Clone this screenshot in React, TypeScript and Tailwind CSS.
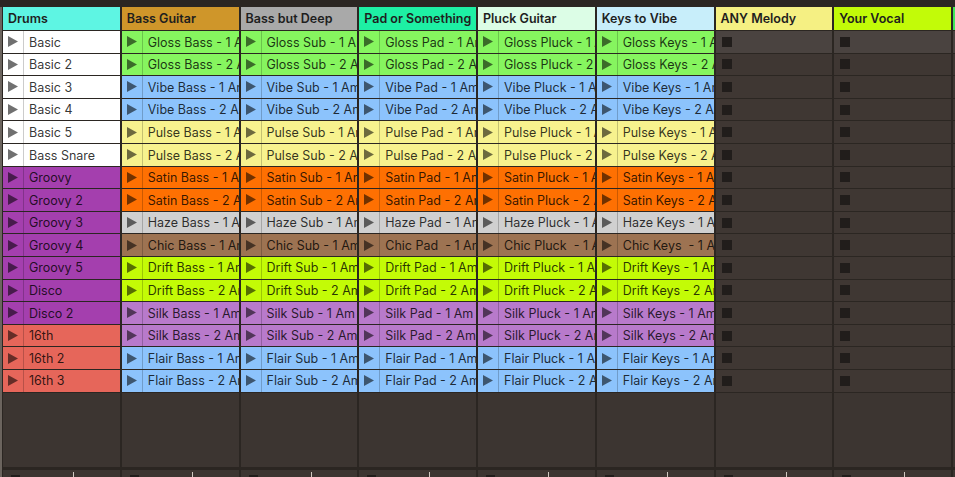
import React from 'react';

type Clip = { name: string; color: string } | null;

interface Track {
    title: string;
    header: string;
    clips: Clip[];
}

const ROW_COLORS = [
    '#86f55f', '#86f55f', '#8cc3fc', '#8cc3fc', '#f7f28e', '#f7f28e',
    '#fe7002', '#fe7002', '#d0d0d0', '#9d7352', '#c3fb06', '#c3fb06',
    '#b87acb', '#b87acb', '#8cc3fc', '#8cc3fc',
];

const ROW_NAMES = [
    'Gloss', 'Gloss', 'Vibe', 'Vibe', 'Pulse', 'Pulse', 'Satin', 'Satin',
    'Haze', 'Chic', 'Drift', 'Drift', 'Silk', 'Silk', 'Flair', 'Flair',
];

const ROW_TAKES = ['1', '2', '1', '2', '1', '2', '1', '2', '1', '1', '1', '2', '1', '2', '1', '2'];

const DRUMS = [
    'Basic', 'Basic 2', 'Basic 3', 'Basic 4', 'Basic 5', 'Bass Snare',
    'Groovy', 'Groovy 2', 'Groovy 3', 'Groovy 4', 'Groovy 5', 'Disco', 'Disco 2',
    '16th', '16th 2', '16th 3',
];

const drumColor = (i: number) => (i < 6 ? '#ffffff' : i < 13 ? '#a43fae' : '#e6665a');

// "Chic" clips on a few tracks were named with a double space
const instrumentClips = (instrument: string, doubleChic: boolean): Clip[] =>
    ROW_NAMES.map((prefix, i) => {
        const gap = prefix === 'Chic' && doubleChic ? '  ' : ' ';
        return { name: `${prefix} ${instrument}${gap}- ${ROW_TAKES[i]} Am`, color: ROW_COLORS[i] };
    });

const empty = (): Clip[] => Array.from({ length: 16 }, () => null);

const TRACKS: Track[] = [
    { title: 'Drums', header: '#5ef5e3', clips: DRUMS.map((name, i) => ({ name, color: drumColor(i) })) },
    { title: 'Bass Guitar', header: '#cf962a', clips: instrumentClips('Bass', false) },
    { title: 'Bass but Deep', header: '#a9a9a9', clips: instrumentClips('Sub', false) },
    { title: 'Pad or Something', header: '#1ef0a4', clips: instrumentClips('Pad', true) },
    { title: 'Pluck Guitar', header: '#dcfde6', clips: instrumentClips('Pluck', true) },
    { title: 'Keys to Vibe', header: '#c8eefa', clips: instrumentClips('Keys', true) },
    { title: 'ANY Melody', header: '#f5f083', clips: empty() },
    { title: 'Your Vocal', header: '#c2fb08', clips: empty() },
    { title: 'Audio', header: '#3fe75a', clips: empty() },
];

const PlayIcon = () => (
    <svg width="10" height="11" viewBox="0 0 10 11" className="shrink-0">
        <polygon points="0,0 10,5.5 0,11" fill="rgba(0,0,0,0.56)" />
    </svg>
);

const ClipSlot: React.FC<{ clip: Clip; row: number }> = ({ clip, row }) => {
    if (!clip) {
        return (
            <div className={`h-[21.6px] flex items-center pl-[6px] ${row === 0 ? 'bg-[#4a4340]' : 'bg-[#3f3733]'}`}>
                <div className="w-[10px] h-[10px] bg-[#211d1b]" />
            </div>
        );
    }
    return (
        <div className="h-[21.6px] flex items-stretch overflow-hidden" style={{ backgroundColor: clip.color }}>
            <div className="w-[21px] shrink-0 flex items-center pl-[5px] border-r border-black/20">
                <PlayIcon />
            </div>
            <div className="pl-[5px] pt-[2px] flex items-center whitespace-pre text-[12.5px] leading-none text-black/80">
                {clip.name}
            </div>
        </div>
    );
};

const TrackColumn: React.FC<{ track: Track }> = ({ track }) => (
    <div className="w-[116.75px] shrink-0 flex flex-col">
        <div
            className="h-[23px] flex items-center px-[5px] pt-[2px] text-[12.5px] font-semibold leading-none text-[#1e1e1e] whitespace-nowrap overflow-hidden"
            style={{ backgroundColor: track.header }}
        >
            {track.title}
        </div>
        <div className="mt-[1px] flex flex-col gap-[1px]">
            {track.clips.map((clip, i) => (
                <ClipSlot key={i} clip={clip} row={i} />
            ))}
        </div>
        <div className="mt-[1px] h-[74px] bg-[#3c3531]" />
        <div className="mt-[3px] h-[10px] bg-[#3c3531] relative">
            <div className="absolute left-[8px] top-[5px] w-[9px] h-[5px] bg-[#211d1b]" />
            <div className="absolute left-[70px] top-[2px] w-[1px] h-[8px] bg-[#cfc8c0]" />
        </div>
    </div>
);

export default function App() {
    return (
        <div
            className="w-[955px] h-[477px] overflow-hidden bg-[#2b2622] flex flex-col"
            style={{ fontFamily: 'Inter, "Noto Sans", sans-serif' }}
        >
            <div className="h-[7px] shrink-0 bg-[#2b2622]" />
            <div className="flex gap-[1px] flex-1">
                <div className="w-[2px] shrink-0 bg-[#6b645e]" />
                <div className="flex gap-[2px]">
                    {TRACKS.map(track => (
                        <TrackColumn key={track.title} track={track} />
                    ))}
                </div>
            </div>
        </div>
    );
}
